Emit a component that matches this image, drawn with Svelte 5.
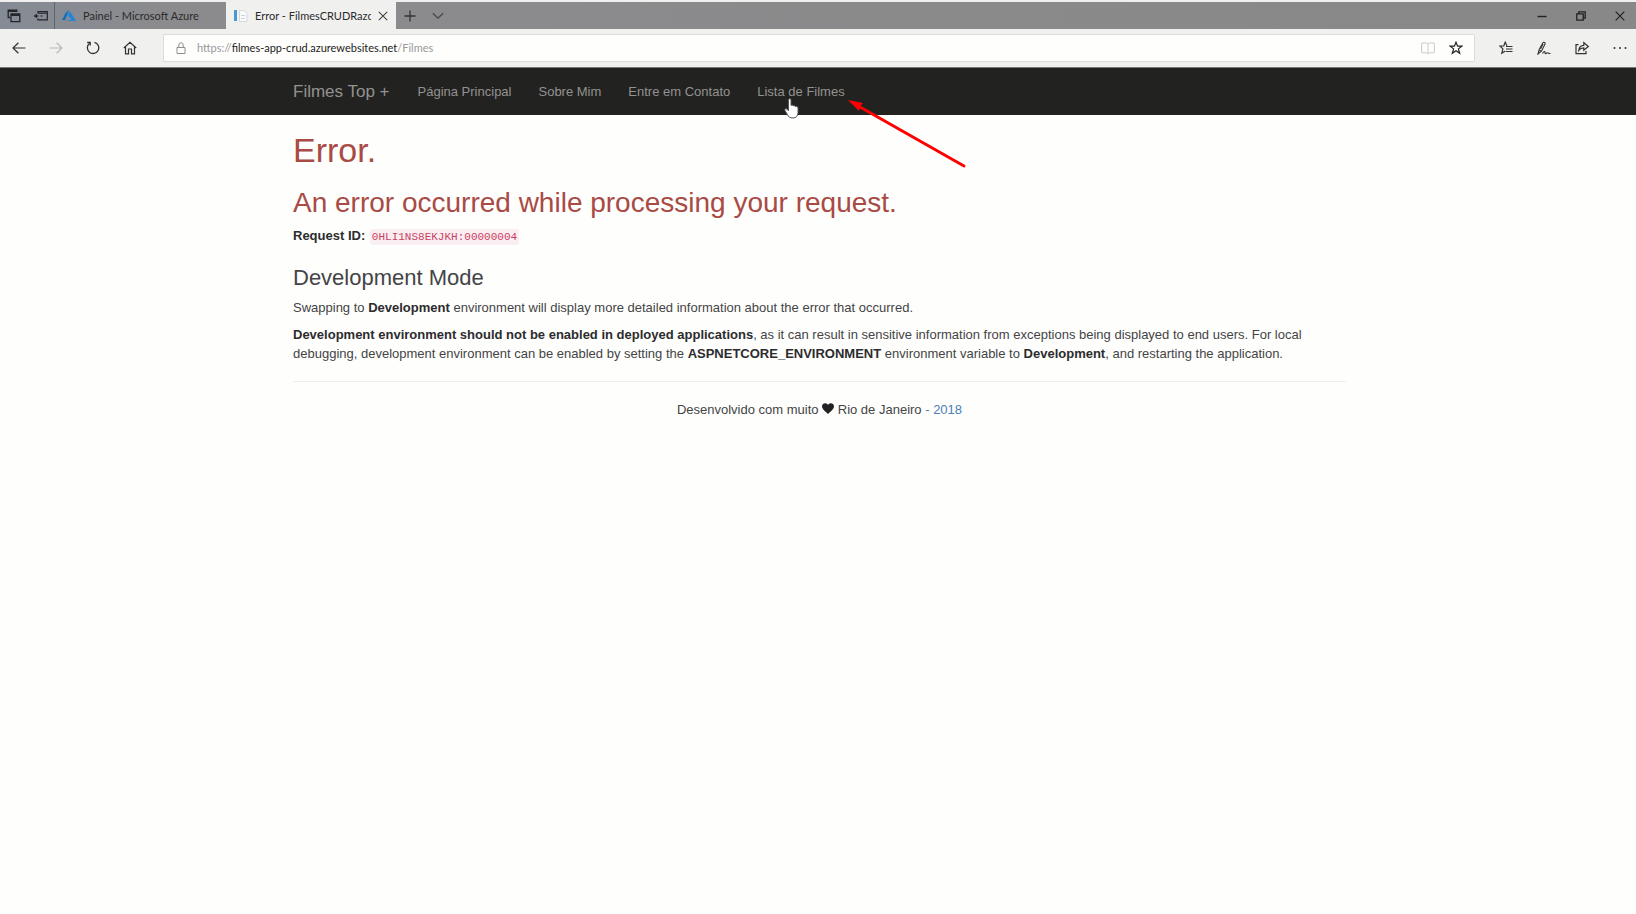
<script>
  const navLinks = ['Página Principal', 'Sobre Mim', 'Entre em Contato', 'Lista de Filmes'];
</script>

<svelte:head><title>Error - FilmesCRUDRazor</title></svelte:head>

<div class="window">
  <div class="tabs">
    <div class="tab-tools">
      <button aria-label="Tabs set aside">
        <svg width="14" height="14" viewBox="0 0 14 14" fill="none" stroke="#23262b" stroke-width="1.3"><path d="M3 8.5H1.2V1.2h8.6V3M1.2 2.4h8.6"/><path d="M4 5h8.800v7.600H4zM4 6.300h8.800" /></svg>
      </button>
      <button aria-label="Set these tabs aside">
        <svg width="16" height="12" viewBox="0 0 16 12" fill="none" stroke="#23262b" stroke-width="1.2"><path d="M5 3.500V1.500h9.300v8.300H5V8.500M5 3.200h9.300M9.500 6H7.500M5.800 6H2"/><path fill="#23262b" stroke="none" d="M.5 6 4 3.800v4.400z"/></svg>
      </button>
    </div>
    <button class="tab">
      <svg width="14" height="12" viewBox="0 0 14 12"><path fill="#0b6fc2" d="M7.200 0 3.600 3.100 0 10.100h3.100z"/><path fill="#2185d8" d="M7.800 1 6 5.500l3.300 4.300L3 11h11z"/></svg>
      <span>Painel - Microsoft Azure</span>
    </button>
    <div class="tab active">
      <svg width="14" height="12" viewBox="0 0 14 12"><path fill="#4a97d8" d="M0 0h3v11H0z"/><path fill="#fafafa" stroke="#d5d9dd" d="M5.500.5h5l2.500 3v8H5.500z"/><path stroke="#cbd2d8" d="M7 5.500h4M7 8.500h4"/></svg>
      <span>Error - FilmesCRUDRazor</span>
      <button aria-label="Close tab"><svg width="10" height="10" viewBox="0 0 10 10" stroke="#444" stroke-width="1.1"><path d="m.8.8 8.400 8.400M9.200.8.8 9.200"/></svg></button>
    </div>
    <button class="icon-btn" aria-label="New tab"><svg width="12" height="12" viewBox="0 0 12 12" stroke="#333" stroke-width="1.3"><path d="M6 .5v11M.5 6h11"/></svg></button>
    <button class="icon-btn" aria-label="Tab previews"><svg width="12" height="8" viewBox="0 0 12 8" fill="none" stroke="#444" stroke-width="1.2"><path d="m.8 1.200 5.200 5 5.200-5"/></svg></button>
    <div class="controls">
      <button aria-label="Minimize"><svg width="10" height="10" viewBox="0 0 10 10" stroke="#222" stroke-width="1.4"><path d="M.5 5.500h9"/></svg></button>
      <button aria-label="Restore"><svg width="10" height="10" viewBox="0 0 10 10" fill="none" stroke="#222" stroke-width="1.3"><path d="M.8 2.800h6.400v6.400H.8zM2.800 2.500V.8h6.400v6.400H7.500"/></svg></button>
      <button aria-label="Close"><svg width="10" height="10" viewBox="0 0 10 10" stroke="#222" stroke-width="1.2"><path d="m.7.7 8.600 8.600M9.300.7.7 9.300"/></svg></button>
    </div>
  </div>

  <div class="toolbar">
    <div class="history">
      <button aria-label="Back"><svg width="14" height="12" viewBox="0 0 14 12" fill="none" stroke="#333" stroke-width="1.2"><path d="M13.500 6H1M6.400.7 1 6l5.400 5.300"/></svg></button>
      <button aria-label="Forward" disabled><svg width="14" height="12" viewBox="0 0 14 12" fill="none" stroke="#b8b8b8" stroke-width="1.2"><path d="M.5 6H13M7.600.7 13 6l-5.400 5.300"/></svg></button>
      <button aria-label="Refresh"><svg width="14" height="14" viewBox="0 0 14 14" fill="none" stroke="#333" stroke-width="1.3"><path d="M8.500 1.300A5.700 5.700 0 1 1 3.700 2.200"/><path d="M1.200 1.500h3v3"/></svg></button>
      <button aria-label="Home"><svg width="14" height="14" viewBox="0 0 14 14" fill="none" stroke="#333" stroke-width="1.2"><path d="M.8 7 7 1.200 13.200 7M2.500 6v6.800h3V8h3v4.800h3V6"/></svg></button>
    </div>
    <div class="address">
      <svg width="10" height="12" viewBox="0 0 10 12" fill="none" stroke="#8f8f8f"><path d="M1 5.500h8v6H1zM2.800 5.500V3a2.200 2.200 0 0 1 4.400 0v2.500"/></svg>
      <span class="url">https://<b>filmes-app-crud.azurewebsites.net</b>/Filmes</span>
      <button aria-label="Reading view" disabled><svg width="14" height="12" viewBox="0 0 14 12" fill="none" stroke="#cbcbcb"><path d="M7 1.500v10M.7 1h4.800L7 2l1.500-1h4.800v9.800H8.500L7 11.500l-1.500-.7H.7z"/></svg></button>
      <button aria-label="Add to favorites"><svg width="14" height="14" viewBox="0 0 14 14" fill="none" stroke="#222" stroke-width="1.2"><path d="m7 1.200 1.600 4h4.200L9.400 7.900l1.300 4.400L7 9.700l-3.700 2.600 1.300-4.400L1.200 5.200h4.200z"/></svg></button>
    </div>
    <div class="actions">
      <button aria-label="Hub"><svg width="14" height="14" viewBox="0 0 14 14" fill="none" stroke="#333" stroke-width="1.2"><path d="M8 4.800 6.200 1.200 4.800 5H.9l3 2.900-1.100 4.400L6.400 10"/><path d="M7 5.500h6.500M7 8h6.500M7 10.500h6.500"/></svg></button>
      <button aria-label="Add notes"><svg width="14" height="14" viewBox="0 0 14 14" fill="none" stroke="#333" stroke-width="1.1"><path d="M1 13 2.200 8.500 5.800 2c.8-1.400 2.800-.5 2.200 1L4.600 10z"/><path d="M2.200 9.500 4.500 10M6 3l-2.500 5M5.500 12.500c1.500-2.500 2.700-2.600 2.500-.8-.1 1.400 1.200 1 2 .2s1.200.8 3.500.6"/></svg></button>
      <button aria-label="Share"><svg width="14" height="14" viewBox="0 0 14 14" fill="none" stroke="#333" stroke-width="1.2"><path d="M3.500 3.600H1v9h10V10"/><path d="M3.800 9.300c.3-3.300 1.900-4.900 5-5V1.500L13.300 5.500 8.800 9.300V6.800c-2.200 0-3.700.6-5 2.500z"/></svg></button>
      <button aria-label="More"><svg width="14" height="4" viewBox="0 0 14 4" fill="#333"><circle cx="1.500" cy="2" r="1"/><circle cx="7" cy="2" r="1"/><circle cx="12.500" cy="2" r="1"/></svg></button>
    </div>
  </div>

  <nav class="navbar">
    <div class="container">
      <a class="brand" href="#home">Filmes Top +</a>
      {#each navLinks as label, i}
        <a href="#{i}" class:pointed={i === 3}>
          {label}
          {#if i === 3}
            <svg class="hand" width="16" height="21" viewBox="0 0 16 21"><path fill="#fff" stroke="#555" d="M4.500 1.800c0-1.500 2.500-1.500 2.500 0v5.700c1-.7 2-.4 2.300.4 1-.5 2-.2 2.300.7 1-.4 2.400 0 2.400 1.400v4.500c0 3.500-2 5.500-5 5.500-3.200 0-4.500-1.200-5.700-3.500L1 12.400c-.7-1.500 1-2.400 2-1.200l1.500 1.600z"/></svg>
            <svg class="arrow" width="122" height="70" viewBox="0 0 122 70"><path stroke="#f00" stroke-width="3" stroke-linecap="round" d="M12 7 116 66"/><path fill="#f00" d="M0 0 15 3 12 6.500 11 11z"/></svg>
          {/if}
        </a>
      {/each}
    </div>
  </nav>

  <main class="container">
    <h1>Error.</h1>
    <h2>An error occurred while processing your request.</h2>
    <p><strong>Request ID:</strong> <code>0HLI1NS8EKJKH:00000004</code></p>
    <h3>Development Mode</h3>
    <p>Swapping to <strong>Development</strong> environment will display more detailed information about the error that occurred.</p>
    <p><strong>Development environment should not be enabled in deployed applications</strong>, as it can result in sensitive information from exceptions being displayed to end users. For local debugging, development environment can be enabled by setting the <strong>ASPNETCORE_ENVIRONMENT</strong> environment variable to <strong>Development</strong>, and restarting the application.</p>
    <hr />
    <footer>Desenvolvido com muito <svg width="12" height="11" viewBox="0 0 12 11"><path fill="#222" d="M6 11C4 8.800 0 6.500 0 3.200 0 .2 4.300-1.200 6 1.800 7.700-1.200 12 .2 12 3.200 12 6.500 8 8.800 6 11z"/></svg> Rio de Janeiro <a href="#2018">- 2018</a></footer>
  </main>
</div>

<style>
  :global(body) { margin: 0; background: #fefefc; }
  .window { font-family: "Liberation Sans", Arial, sans-serif; font-size: 13px; line-height: 18px; color: #444446; }
  button { display: flex; align-items: center; justify-content: center; padding: 0; border: 0; background: none; font: inherit; color: inherit; }
  svg { flex: none; }

  .tabs { display: flex; height: 27px; border-top: 2px solid #efefef; background: linear-gradient(90deg, #858b95 0, #8b8b8d 160px, #8b8b8d 480px, #888 100%); font-family: Lato, "Open Sans", sans-serif; font-size: 11px; color: #2a2a2c; }
  .tab-tools { display: flex; width: 54px; border-right: 1px solid #5f636a; }
  .tab-tools button { width: 27px; }
  .tab { display: flex; align-items: center; justify-content: flex-start; width: 171px; gap: 7px; padding-left: 7px; box-sizing: border-box; }
  .tab.active { width: 170px; padding: 0 8px; background: #f0f0ef; }
  .tab span { white-space: nowrap; overflow: hidden; }
  .tab.active span { flex: 1; min-width: 0; }
  .icon-btn { width: 28px; }
  .controls { display: flex; margin-left: auto; margin-right: -3px; }
  .controls button { width: 39px; }

  .toolbar { display: flex; align-items: center; height: 38px; background: #f0f0ef; border-bottom: 1px solid #777; }
  .history { display: flex; width: 163px; }
  .history button { width: 37px; height: 28px; }
  .address { flex: 1; display: flex; align-items: center; height: 28px; box-sizing: border-box; padding: 0 4px 0 12px; background: #fefefc; border: 1px solid #dcdcdc; border-radius: 1px; font-family: Lato, "Open Sans", sans-serif; font-size: 11px; color: #999; }
  .url { flex: 1; margin-left: 11px; }
  .url b { font-weight: 400; color: #222; }
  .address button { width: 28px; }
  .actions { display: flex; margin-left: 12px; margin-right: -3px; }
  .actions button { width: 38px; height: 28px; }

  .container { max-width: 1053px; margin: 0 auto; padding-left: 3px; }
  .navbar { background: #222221; }
  .navbar .container { display: flex; align-items: center; height: 47px; gap: 27px; }
  .navbar a { color: #929290; text-decoration: none; white-space: nowrap; }
  .navbar .brand { padding-right: 1px; font-size: 17px; }
  .pointed { position: relative; }
  .hand { position: absolute; left: 27px; top: 15px; }
  .arrow { position: absolute; left: 91px; top: 17px; }

  h1, h2, h3 { margin: 0; font-weight: 400; }
  h1 { margin-top: 17px; font-size: 34px; line-height: 36px; color: #a94a45; }
  h2 { margin-top: 20px; font-size: 28px; line-height: 30px; color: #a94a45; }
  h3 { margin-top: 18px; font-size: 22px; line-height: 25px; }
  p { margin: 8px 0 0; line-height: 19px; }
  strong { color: #2c2c2e; }
  code { margin-left: 1px; padding: 2px; border-radius: 3px; background: #f9eef2; color: #cc3f63; font-family: "Liberation Mono", monospace; font-size: 11px; }
  hr { margin: 18px 0 19px; border: 0; border-top: 1px solid #eeeeed; }
  footer { text-align: center; }
  footer a { color: #4b80b8; text-decoration: none; }
</style>
